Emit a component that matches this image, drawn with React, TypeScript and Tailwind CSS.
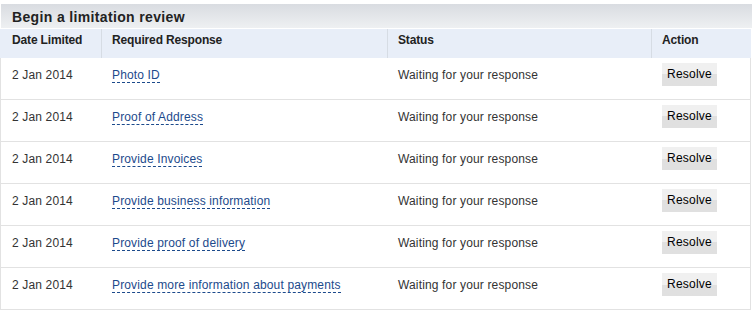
const rows = [
  "Photo ID",
  "Proof of Address",
  "Provide Invoices",
  "Provide business information",
  "Provide proof of delivery",
  "Provide more information about payments",
];

export default function App() {
  return (
    <div className="w-[752px] h-[313px] bg-white pt-[4px] text-[#333] font-['Liberation_Sans',Arial,sans-serif]">
      <div className="w-[751px] ml-[1px] h-[24px] bg-gradient-to-b from-[#d9dce1] to-[#eef0f2] pl-[11px] text-[14px] font-bold leading-[26px] tracking-[0.35px] text-[#222]">
        Begin a limitation review
      </div>
      <div className="w-[751px] mt-[1px] h-[29px] bg-[#e8eef8] grid grid-cols-[101px_286px_264px_100px] text-[12px] font-bold leading-[14px] tracking-[-0.15px] text-[#222]">
        <div className="pl-[12px] pt-[4px]">Date Limited</div>
        <div className="pl-[10px] pt-[4px] border-l border-[#d6dce4]">Required Response</div>
        <div className="pl-[10px] pt-[4px] border-l border-[#d6dce4]">Status</div>
        <div className="pl-[10px] pt-[4px] border-l border-[#d6dce4]">Action</div>
      </div>
      {rows.map((r) => (
        <div
          key={r}
          className="w-[751px] h-[42px] border-l border-r border-b border-[#e2e2e2] grid grid-cols-[100px_286px_264px_99px] text-[12px] leading-[14px] tracking-[0.15px]"
        >
          <div className="pl-[11px] pt-[10px]">2 Jan 2014</div>
          <div className="pl-[11px] pt-[10px]">
            <span className="text-[#1c4a8c] border-b border-dashed border-[#1c4a8c]">{r}</span>
          </div>
          <div className="pl-[11px] pt-[10px]">Waiting for your response</div>
          <div className="pl-[11px] pt-[5px]">
            <button className="block w-[55px] h-[23px] bg-gradient-to-b from-[#f0f0f0] from-50% to-[#e0e0e0] to-50% text-[12px] text-black leading-[23px] tracking-[0.2px]">
              Resolve
            </button>
          </div>
        </div>
      ))}
    </div>
  );
}
